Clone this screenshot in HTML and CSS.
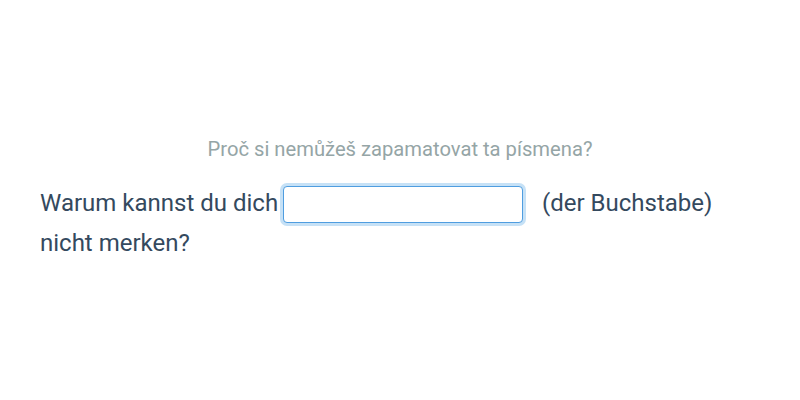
FILE: index.html
```html
<!DOCTYPE html>
<html lang="de">
  <head>
    <meta charset="UTF-8" />
    <meta name="viewport" content="width=device-width, initial-scale=1.0" />
    <title>Cvičení</title>
    <link rel="stylesheet" href="styles.css">
  </head>
  <body>
    <div id="cviceni">
      <p class="napoveda">Proč si nemůžeš zapamatovat ta písmena?</p>
      <p class="veta">
        Warum kannst du dich <input type="text" class="mezera" /> (der Buchstabe) nicht merken?
      </p>
    </div>
  </body>
</html>
```

FILE: styles.css
```css
body {
  margin: 0;
  background-color: #fff;
  font-family: Roboto, "Liberation Sans", sans-serif;
}

#cviceni {
  padding: 137px 40px 0;
}

.napoveda {
  margin: 0 0 22px;
  font-size: 20.2px;
  color: #95a5a6;
  text-align: center;
}

.veta {
  margin: 0;
  font-size: 24px;
  line-height: 40px;
  color: #34495e;
}

.mezera {
  width: 240px;
  height: 37px;
  box-sizing: border-box;
  margin: 0 13px 0 -1px;
  padding: 0 8px;
  border: 1px solid #4f9de0;
  border-radius: 4px;
  box-shadow: 0 0 0 3px #c6e1f6;
  font-family: inherit;
  font-size: 20px;
  vertical-align: middle;
  outline: none;
}
```
